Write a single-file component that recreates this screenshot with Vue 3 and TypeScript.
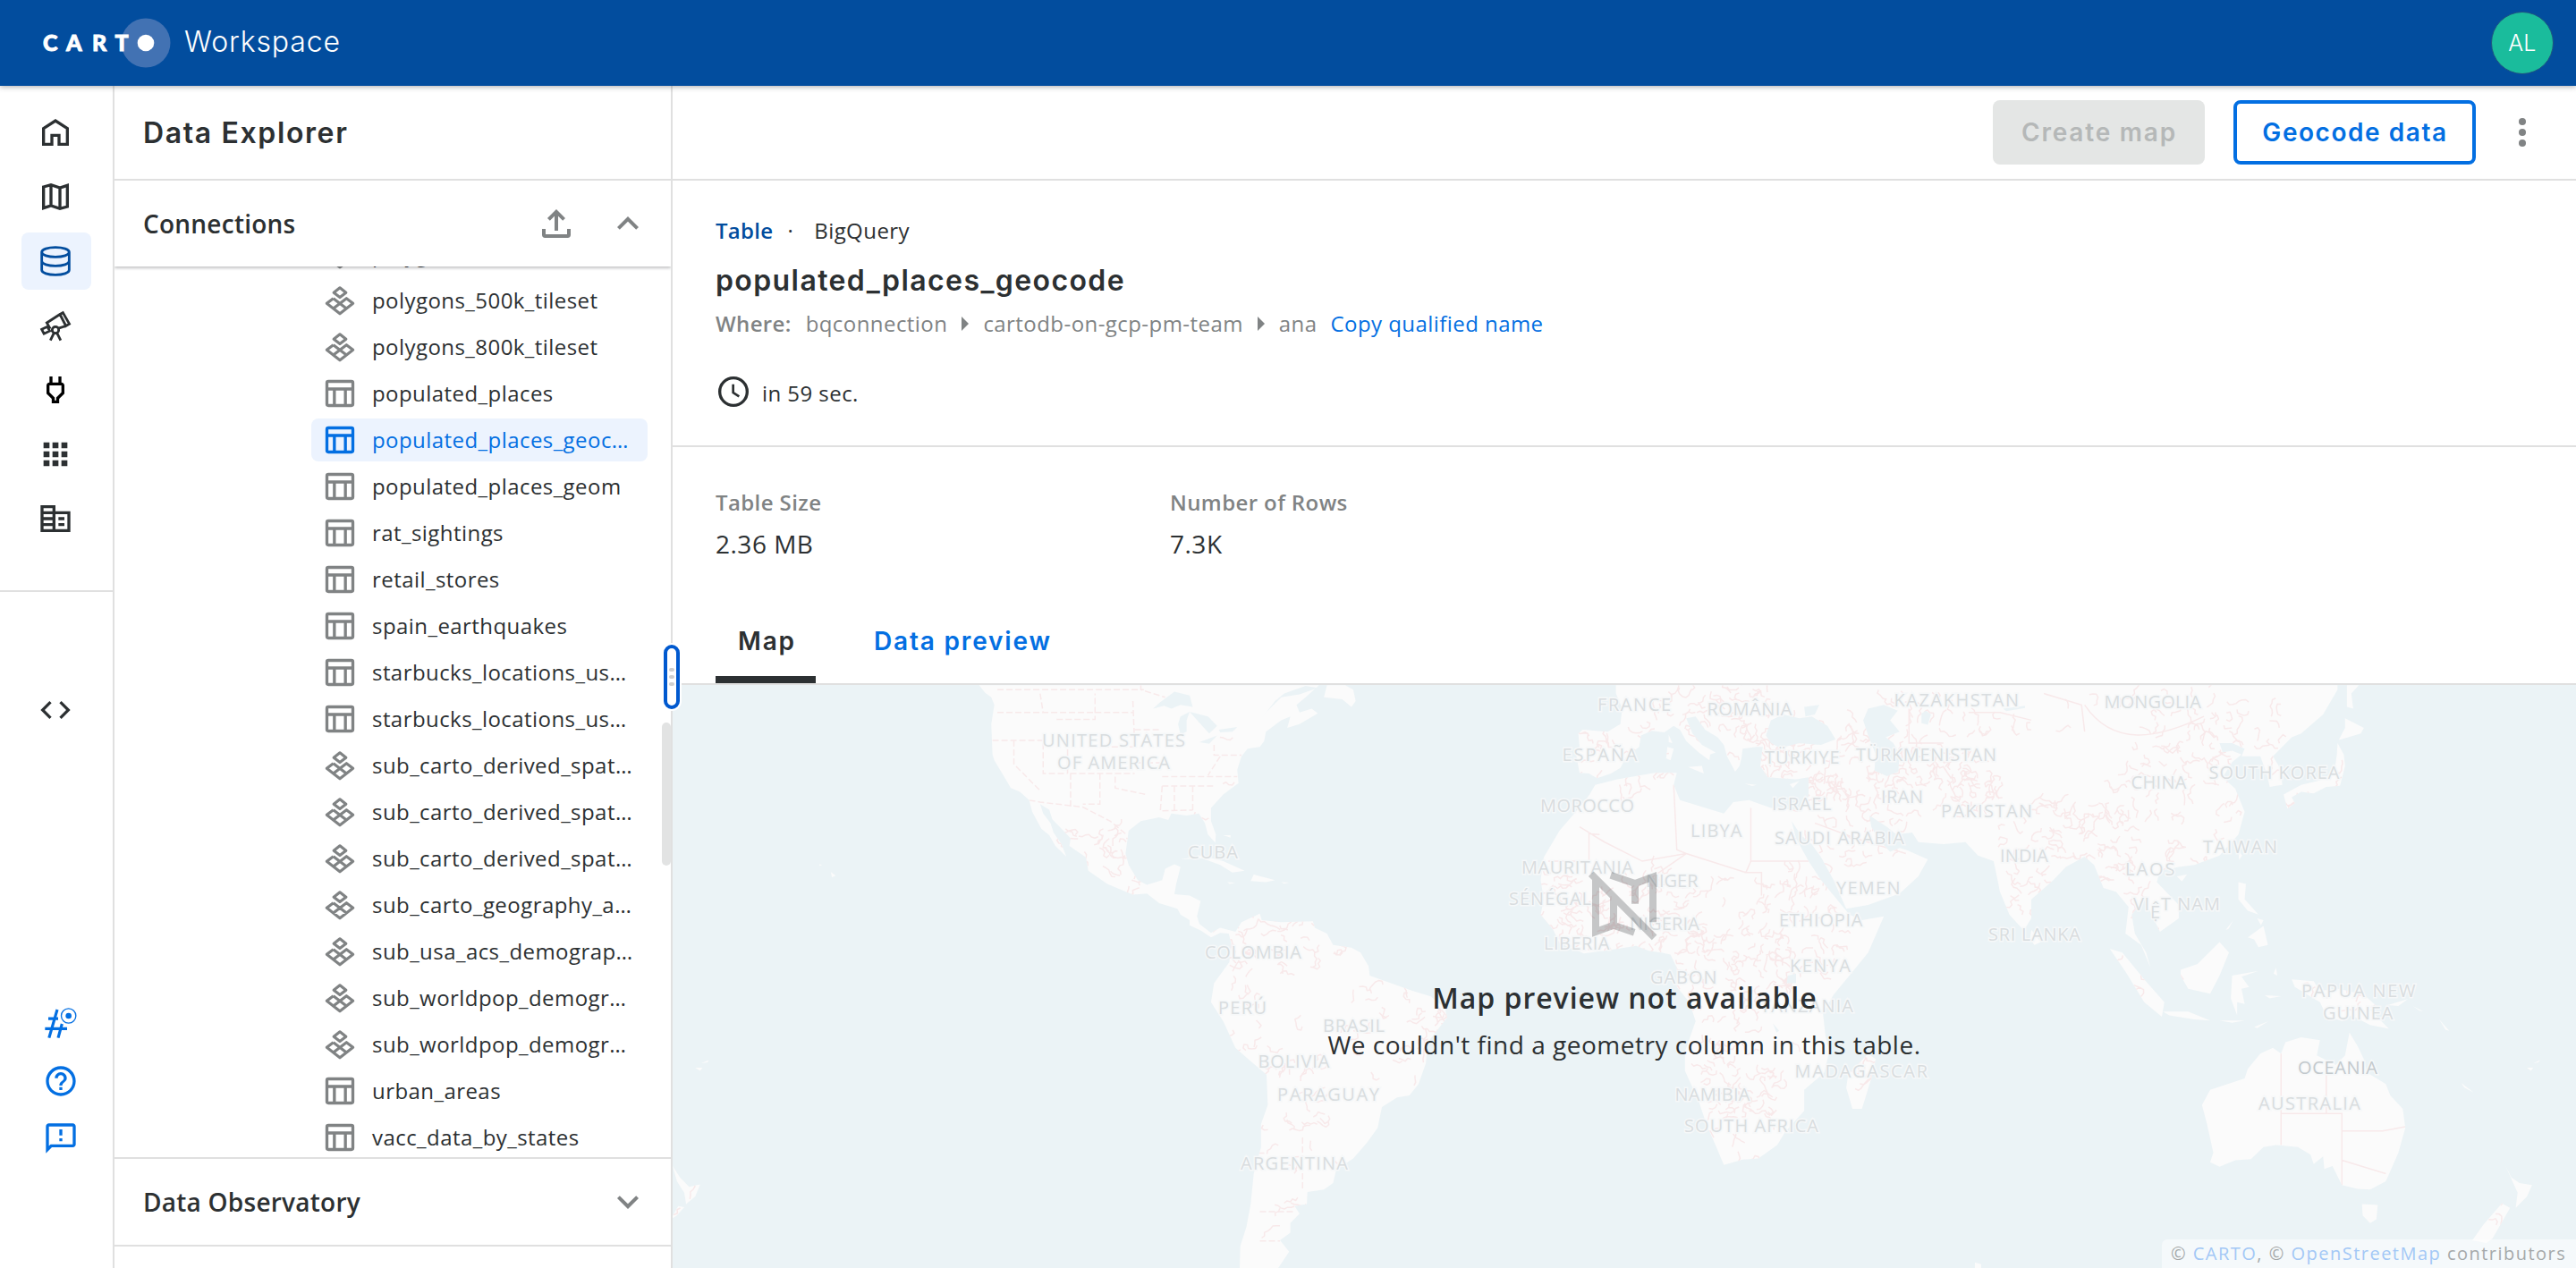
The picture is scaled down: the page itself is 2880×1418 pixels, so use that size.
<script setup lang="ts">
interface NavItem { id: string; label: string; active?: boolean; black?: boolean; d?: string; stroke?: string }
interface TreeItem { name: string; kind: 'table' | 'tileset'; active?: boolean }
type Label = [text: string, x: number, width: number, y: number, strong?: boolean]

const nav: NavItem[] = [
  { id: 'home', label: 'Home', stroke: 'M4 9.4 12 4.2l8 5.2V20h-5.6v-6H9.6v6H4z' },
  { id: 'maps', label: 'Maps', stroke: 'M4 5.4 9 4l6 2 5-1.6v14.2L15 20l-6-2-5 1.6zM9 4v14M15 6v14' },
  { id: 'data', label: 'Data Explorer', active: true, stroke: 'M2.8 6c0-1.8 4.1-3.2 9.2-3.2S21.2 4.200 21.200 6 17.100 9.200 12 9.200 2.800 7.800 2.800 6zv12c0 1.800 4.100 3.200 9.200 3.200s9.200-1.400 9.200-3.200V6M2.800 12c0 1.800 4.100 3.200 9.200 3.200s9.200-1.400 9.200-3.200' },
  { id: 'observatory', label: 'Data Observatory', stroke: 'M15 4.500 17 3.400l4.300 7.500-2.300 1.400zM15 4.500 6.200 10.200 8.500 14.200M19 12.300 14 13.900M2.800 14.600l3.800-1.800 1.500 2.900-3.800 1.800zM12 12.800a2.200 2.200 0 1 1 0 4.400 2.200 2.200 0 0 1 0-4.400zM11 17l-2.400 5M13 17l2.500 5' },
  { id: 'connections', label: 'Connections', black: true, d: 'M16 9v4.660l-3.500 3.510V19h-1v-1.830L8 13.650V9h8m0-6h-2v4h-4V3H8v4h-.01C6.900 6.990 6 7.890 6 8.990v5.520L9.500 18v3h5v-3l3.500-3.510V9c0-1.100-.9-2-2-2V3z' },
  { id: 'apps', label: 'Applications', d: 'M4 8h4V4H4v4zm6 12h4v-4h-4v4zm-6 0h4v-4H4v4zm0-6h4v-4H4v4zm6 0h4v-4h-4v4zm6-10v4h4V4h-4zm-6 4h4V4h-4v4zm6 6h4v-4h-4v4zm0 6h4v-4h-4v4z' },
  { id: 'org', label: 'Organization', d: 'M12 7V3H2v18h20V7H12zM10 19H4v-2h6v2zm0-4H4v-2h6v2zm0-4H4V9h6v2zm0-4H4V5h6v2zm10 12h-8V9h8v10zm-2-8h-4v2h4v-2zm0 4h-4v2h4v-2z' },
]

const tree: TreeItem[] = [
  { name: 'polygons_1m_tileset', kind: 'tileset' },
  { name: 'polygons_500k_tileset', kind: 'tileset' },
  { name: 'polygons_800k_tileset', kind: 'tileset' },
  { name: 'populated_places', kind: 'table' },
  { name: 'populated_places_geoc…', kind: 'table', active: true },
  { name: 'populated_places_geom', kind: 'table' },
  { name: 'rat_sightings', kind: 'table' },
  { name: 'retail_stores', kind: 'table' },
  { name: 'spain_earthquakes', kind: 'table' },
  { name: 'starbucks_locations_us…', kind: 'table' },
  { name: 'starbucks_locations_us…', kind: 'table' },
  { name: 'sub_carto_derived_spat…', kind: 'tileset' },
  { name: 'sub_carto_derived_spat…', kind: 'tileset' },
  { name: 'sub_carto_derived_spat…', kind: 'tileset' },
  { name: 'sub_carto_geography_a…', kind: 'tileset' },
  { name: 'sub_usa_acs_demograp…', kind: 'tileset' },
  { name: 'sub_worldpop_demogr…', kind: 'tileset' },
  { name: 'sub_worldpop_demogr…', kind: 'tileset' },
  { name: 'urban_areas', kind: 'table' },
  { name: 'vacc_data_by_states', kind: 'table' },
]

const labels: Label[] = [
  ['UNITED STATES', 1165, 160, 835], ['OF AMERICA', 1182, 126, 860], ['CUBA', 1328, 56, 960],
  ['COLOMBIA', 1347, 108, 1071.500], ['PERÚ', 1362, 54, 1134], ['BRASIL', 1479, 69, 1154],
  ['BOLIVIA', 1406.500, 80, 1193.500], ['PARAGUAY', 1428, 114, 1231], ['ARGENTINA', 1387, 120, 1308],
  ['LIBERIA', 1726, 73.500, 1061.500], ['MAURITANIA', 1701, 125, 976.500], ['SÉNÉGAL', 1687, 92, 1011.500],
  ['FRANCE', 1786, 82, 794.500], ['ROMÂNIA', 1908.500, 95, 799.500], ['KAZAKHSTAN', 2117.500, 139.500, 789.500],
  ['MONGOLIA', 2352.500, 108.500, 792], ['ESPAÑA', 1746.500, 84, 851], ['TÜRKIYE', 1973, 83.500, 854],
  ['TÜRKMENISTAN', 2075, 157, 850.500], ['SOUTH KOREA', 2469.500, 146, 870.500], ['CHINA', 2382.500, 62, 881.500],
  ['IRAN', 2103, 47, 898], ['ISRAEL', 1981, 66.500, 905.500], ['PAKISTAN', 2170, 102, 913.500],
  ['MOROCCO', 1722, 105, 908], ['LIBYA', 1890, 57.500, 936], ['SAUDI ARABIA', 1984, 145, 943.500],
  ['INDIA', 2236, 54, 964], ['TAIWAN', 2463, 83, 954], ['LAOS', 2376, 55.500, 978.500],
  ['VI', 2385, 18, 1018], ['Ệ', 2404, 11, 1027], ['T NAM', 2416, 66, 1018],
  ['NIGER', 1840, 58.500, 991.500], ['NIGERIA', 1822, 78, 1040], ['YEMEN', 2053, 71.500, 1000],
  ['ETHIOPIA', 1989, 93.500, 1036], ['SRI LANKA', 2223, 103, 1051.500], ['KENYA', 2001, 68, 1086.500],
  ['GABON', 1845, 74.500, 1100], ['TANZANIA', 1968, 104, 1132], ['MADAGASCAR', 2006.500, 148.500, 1204.500],
  ['NAMIBIA', 1872.500, 84, 1230.500], ['SOUTH AFRICA', 1883, 150, 1266], ['PAPUA NEW', 2573, 127.500, 1114.500],
  ['GUINEA', 2597, 78.500, 1139.500], ['OCEANIA', 2569, 89, 1201, true], ['AUSTRALIA', 2525, 114, 1240.500],
]

/* Each hemisphere is digitised in its own sheet units and placed by a transform. */
const west = 'matrix(.6824 0 0 .4261 750 750)'
const east = 'matrix(.7015 0 0 .4261 1780 750)'

const americas = [
  'M505 38 515 58 525 70 530 90 525 140 527 220 530 235 545 275 557 308 572 318 587 340 592 370 607 415 620 432 630 460 648 488 640 455 627 425 622 400 610 375 605 350 620 365 625 390 640 415 655 440 653 460 680 490 684 525 715 560 757 588 780 585 800 610 830 625 835 640 850 655 850 668 868 682 885 700 900 688 914 690 918 715 915 765 890 820 885 870 905 920 925 990 950 1025 976 1060 978 1140 967 1190 967 1250 955 1320 950 1400 943 1460 933 1510 932 1568 995 1568 1013 1525 998 1495 1015 1475 1015 1450 1030 1425 1022 1405 1042 1400 1043 1368 1070 1362 1085 1345 1090 1310 1118 1280 1140 1240 1158 1200 1165 1145 1190 1120 1210 1115 1225 1085 1237 1030 1240 975 1255 945 1272 910 1268 885 1245 855 1215 840 1180 820 1145 800 1143 775 1130 740 1115 727 1085 720 1075 690 1055 675 1052 658 1000 660 968 655 965 638 935 660 925 685 900 675 885 688 866 665 862 645 868 605 850 590 825 587 828 560 835 515 825 508 810 520 805 550 780 562 765 550 750 510 745 480 750 420 770 395 800 385 815 392 820 375 845 380 865 375 875 400 880 430 892 452 893 430 885 395 885 360 905 325 930 295 928 260 935 225 945 205 965 200 972 185 975 160 1000 130 1015 120 1010 150 1030 140 1060 112 1050 100 1030 110 1025 90 1040 70 1062 38z',
  'M1075 38 1070 70 1100 75 1115 95 1122 80 1118 50 1105 38z',
  'M835 495 870 485 905 500 940 525 920 530 900 510 870 492zM955 535 990 550 975 555 950 552zM912 555 925 557 915 560zM1000 555 1013 556 1005 559zM905 432 917 432 917 438z',
  'M3 1300 15 1330 30 1355 48 1348 40 1380 25 1400 22 1370 10 1340zM0 1440 12 1405 22 1408 10 1430zM40 1042 52 1042 48 1050zM50 1030 62 1022 60 1028zM262 528 270 538 264 542zM243 508 248 510 244 512z',
].join('')
const lakes = 'M790 100 800 85 825 55 850 65 855 95 835 90 820 100 808 92zM835 120 850 108 845 130 845 160 835 168 831 140zM850 108 880 120 895 145 882 165 868 140zM866 188 895 170 882 192zM898 155 928 148 920 160 900 162zM1000 70 1030 62 1060 45 1040 40 1005 60 990 80 965 130 975 110z'

const eurasia = [
  'M38 38V60L48 100 45 140 25 160-15 155-22 165-20 200-25 225-20 268-5 270 8 282 30 270 45 255 55 225 75 200 78 170 95 158 115 162 130 145 140 155 150 185 170 215 187 235 188 220 197 215 175 195 160 165 150 125 165 120 180 155 200 175 210 195 215 225 228 265 235 250 238 230 240 205 262 200 272 200 268 250 280 280 325 285 345 280 345 330 335 362 325 365 285 360 250 340 225 345 210 375 190 365 140 340 130 300 135 268 100 268 40 285 5 300-4 325-18 355-52 420-77 490-82 550-77 600-82 640-62 680-52 715-13 742 30 733 70 722 90 735 110 740 125 745 135 780 135 830 155 870 165 920 148 1000 148 1050 170 1130 182 1190 198 1250 210 1297 240 1283 265 1280 295 1245 308 1210 338 1155 338 1100 370 1055 378 1000 372 960 368 900 385 850 410 800 440 740 465 645 430 655 410 640 395 610 365 550 345 500 325 440 318 395 332 430 342 445 350 455 365 490 385 550 405 625 440 615 490 585 520 540 535 495 500 470 490 465 475 475 460 450 445 410 442 380 470 410 485 430 510 425 520 450 560 455 595 450 615 485 640 500 650 580 665 640 688 682 700 650 700 600 735 550 755 515 785 488 800 510 815 570 835 580 855 620 850 690 875 720 890 780 883 740 865 690 860 640 880 600 905 685 935 650 935 615 900 555 905 525 935 515 960 510 1000 485 1030 430 1040 370 1025 310 1005 280 1020 240 1035 220 1020 210 1005 215 1000 190 1020 190 1040 205 1035 225 1065 225 1075 270 1080 305 1100 300 1098 260 1085 225 1115 175 1130 165 1165 115 1188 50V38z',
  'M153 253 175 250 178 270zM120 200 130 205 125 235 118 230zM122 168 128 190 122 188zM243 296 262 300 255 303zM315 298 330 290 320 308z',
  'M405 1095 408 1060 440 1005 452 1020 445 1070 430 1150 415 1150zM700 680 715 712 705 720 698 705z',
  'M825 730 845 740 880 810 912 870 908 908 880 870 850 790zM910 895 950 895 985 918 960 915 920 905zM938 785 965 770 1000 712 1015 740 1000 800 985 848 950 835 938 800zM1020 800 1062 788 1035 803 1047 830 1035 835 1040 875 1028 870 1028 905 1018 860zM1090 780 1092 800 1086 795zM1000 918 1040 918 1020 924zM1055 935 1078 920 1060 938zM1072 852 1098 854 1080 860z',
  'M1030 555 1042 560 1040 600 1062 640 1045 630 1030 600zM1045 700 1070 670 1077 720 1062 726 1055 705zM1010 680 1022 655 1014 678zM1060 650 1070 655 1066 668zM1030 470 1036 485 1031 497zM932 540 948 535 940 553z',
  'M1115 810 1150 815 1160 840 1190 835 1230 850 1250 880 1240 890 1270 940 1240 930 1210 905 1195 920 1170 905 1160 870 1120 830zM1268 878 1300 862 1285 880zM1308 880 1325 895 1318 892zM1350 915 1366 945 1360 942z',
  'M1203 38H1222L1210 60 1213 100 1203 95zM1200 125 1230 150 1225 165 1205 175 1190 182 1200 150zM1188 190 1198 220 1200 250 1192 302 1170 305 1150 322 1130 318 1115 332 1120 348 1108 362 1102 325 1130 300 1160 288 1183 265 1187 220z',
  'M972 1140 985 1100 1040 1070 1045 1045 1065 1005 1085 990 1098 1005 1105 975 1130 962 1160 970 1155 1010 1185 1035 1200 1010 1207 950 1220 985 1230 1020 1235 1055 1265 1085 1272 1115 1292 1150 1296 1200 1285 1265 1265 1340 1240 1362 1220 1360 1195 1350 1180 1300 1167 1308 1165 1275 1150 1295 1145 1270 1125 1250 1090 1245 1070 1250 1050 1282 1025 1285 1000 1302 985 1290 990 1265 980 1190zM1227 1400 1252 1402 1250 1440 1240 1450 1228 1430z',
  'M1455 1297 1465 1330 1478 1345 1498 1350 1490 1380 1472 1410 1475 1370zM1450 1398 1463 1410 1435 1490 1425 1502 1403 1495 1420 1455zM1385 1082 1405 1107 1390 1094zM1490 1042 1500 1042 1496 1050zM1500 1030 1511 1022 1508 1028zM610 1553 620 1558 620 1568 610 1568z',
].join('')
const seas = 'M285 190 277 170 285 130 305 115 330 125 350 120 375 145 388 180 365 195 330 190 300 203zM338 95 362 90 355 115 340 120zM440 100 465 90 487 105 475 130 490 160 468 175 480 190 490 220 488 265 470 277 450 262 452 220 440 170 432 130zM525 112 532 105 540 115 535 142 525 138zM312 800 325 795 325 820 310 820zM655 100 690 92 690 98 660 106zM288 925 298 945 294 950z'

const stateLines = 'M535 110H695M605 60 610 110M632 128H695V60M695 110H757M757 80 760 200H712M527 183H610V270H650M562 183V245L607 318M650 183V270H760M655 270V358M703 270V350H675M728 278V308L778 325M760 155H800M765 242H805M805 303 890 303M805 278H928M825 303V370M855 303V370M805 303 802 368 855 366M890 195V222H935M900 225 880 275M587 340 605 345 675 358 720 395 748 432M535 50H775M965 1420H1022M965 1497H998M1035 1225V1360M770 38V50L810 70'
const eastLines = 'M1098 1005V1245M1098 1162H1195V1350M1170 1060V1162M1195 1208H1260L1296 1197M1195 1285 1265 1320M253 360V500H345M253 500 245 530 270 530V590M130 300 135 470 150 480 245 530M150 480 80 560M-20 410 20 450 80 500 150 480M12 430-5 428V500H-70M355 400 420 440 500 480M505 100V190H560M600 110H650L700 130M720 60 780 90 785 160M785 90C830 200 900 180 975 120'

/* Repeatable pseudo-random walk used for the minor administrative borders. */
let seed = 20230
const rand = () => {
  seed = (seed * 16807) % 2147483647
  return seed / 2147483647
}
const zones: number[][] = [
  [1230, 965, 55, 45, 45], [1400, 880, 60, 60, 14], [1420, 1050, 80, 40, 44], [1385, 1130, 30, 70, 16], [1560, 1150, 60, 70, 36],
  [1440, 1260, 50, 130, 46], [1810, 850, 60, 40, 34], [1900, 790, 90, 30, 46], [2000, 850, 60, 40, 60], [2090, 880, 60, 70, 56],
  [2150, 830, 90, 60, 60], [2210, 880, 30, 30, 26], [2290, 960, 60, 70, 60], [2420, 900, 90, 90, 66], [2490, 810, 90, 45, 36],
  [2350, 960, 40, 70, 34], [1745, 1030, 40, 60, 50], [1850, 1040, 70, 70, 90], [1930, 1130, 80, 150, 120], [2010, 1030, 60, 70, 50],
  [1930, 1240, 60, 70, 40], [2085, 1200, 20, 50, 14], [2575, 880, 50, 40, 26], [2620, 1120, 60, 30, 14], [2395, 1080, 40, 60, 18],
  [770, 1325, 20, 30, 6], [2790, 1350, 30, 40, 10], [2040, 950, 60, 50, 16], [2340, 800, 120, 30, 16],
]
const roads = zones.map(([cx, cy, rx, ry, n]) => {
  let d = ''
  for (let i = 0; i < n; i++) {
    const a = rand() * 6.283
    const r = Math.sqrt(rand())
    let x = cx + Math.cos(a) * rx * r
    let y = cy + Math.sin(a) * ry * r
    let dir = rand() * 6.283
    d += `M${x.toFixed(1)} ${y.toFixed(1)}`
    const steps = 3 + Math.floor(rand() * 5)
    for (let s = 0; s < steps; s++) {
      dir += (rand() - 0.5) * 3
      x += Math.cos(dir) * 4
      y += Math.sin(dir) * 4
      d += `L${x.toFixed(1)} ${y.toFixed(1)}`
    }
  }
  return d
}).join('')
</script>

<template>
  <div class="app">
    <header class="topbar">
      <svg class="logo" width="170" height="96" viewBox="0 0 170 96" aria-label="CARTO">
        <circle cx="123" cy="48" r="27.500" fill="#4272b3" />
        <text x="8 34 63 88.500" y="56.800">CART</text>
        <circle cx="123" cy="48" r="9.300" fill="#fff" />
      </svg>
      <span class="product">Workspace</span>
      <span class="avatar">AL</span>
    </header>

    <div class="body">
      <nav class="rail">
        <ul class="rail-main">
          <li v-for="n in nav" :key="n.id" :class="{ active: n.active, black: n.black }" :title="n.label">
            <svg class="ic" viewBox="0 0 24 24">
              <path v-if="n.d" :d="n.d" fill="currentColor" />
              <path v-else :d="n.stroke" fill="none" stroke="currentColor" :stroke-width="n.id === 'home' || n.id === 'maps' ? 2 : 1.7" />
            </svg>
          </li>
        </ul>
        <div class="rail-dev">
          <svg class="ic" viewBox="0 0 24 24"><path fill="currentColor" d="M9.400 16.600 4.800 12l4.600-4.600L8 6l-6 6 6 6 1.400-1.400zm5.200 0 4.600-4.600-4.600-4.600L16 6l6 6-6 6-1.400-1.400z" /></svg>
        </div>
        <div class="rail-help">
          <svg class="ic" viewBox="0 0 24 24" fill="none" stroke="currentColor" stroke-width="1.900">
            <path d="M9.600 2.400 4.100 21.400M12.800 12l-2.600 9.400M3.600 8.500h6.600M1.400 15.200h14.800" />
            <circle cx="17.200" cy="6.600" r="4.900" stroke-width=".8" />
            <circle cx="17.200" cy="6.600" r="2" fill="currentColor" stroke="none" />
          </svg>
          <svg class="ic" viewBox="0 0 24 24"><path fill="currentColor" d="M11 18h2v-2h-2v2zm1-16C6.480 2 2 6.480 2 12s4.480 10 10 10 10-4.480 10-10S17.520 2 12 2zm0 18c-4.410 0-8-3.590-8-8s3.590-8 8-8 8 3.590 8 8-3.590 8-8 8zm0-14c-2.210 0-4 1.790-4 4h2c0-1.100.9-2 2-2s2 .9 2 2c0 2-3 1.750-3 5h2c0-2.250 3-2.500 3-5 0-2.210-1.790-4-4-4z" /></svg>
          <svg class="ic" viewBox="0 0 24 24"><path fill="currentColor" d="M20 2H4c-1.100 0-1.990.9-1.990 2L2 22l4-4h14c1.100 0 2-.9 2-2V4c0-1.100-.9-2-2-2zm0 14H5.170L4 17.170V4h16v12zM11 12h2v2h-2zM11 6h2v4h-2z" /></svg>
        </div>
      </nav>

      <aside class="panel">
        <h1 class="panel-title">Data Explorer</h1>
        <div class="section-head raised">
          <span>Connections</span>
          <svg class="big upload" viewBox="0 0 24 24" fill="none" stroke="currentColor" stroke-width="2"><path d="M5 15v3.300q0 .7.7.7h12.600q.7 0 .7-.7V15M12 16V5.500M7.700 9.700 12 5.400l4.300 4.300" /></svg>
          <svg class="big" viewBox="0 0 24 24"><path fill="currentColor" d="m12 8-6 6 1.410 1.410L12 10.830l4.590 4.580L18 14z" /></svg>
        </div>
        <div class="tree-wrap">
          <ul class="tree">
            <li v-for="(t, i) in tree" :key="i" :class="{ active: t.active }">
              <svg class="ic" viewBox="0 0 24 24" fill="none" stroke="currentColor">
                <template v-if="t.kind === 'table'">
                  <rect x="3.300" y="3.900" width="17.400" height="16.200" rx="1" stroke-width="2" />
                  <path d="M3 9h18M8.300 9v11M15.700 9v11" stroke-width="2" />
                </template>
                <path v-else stroke-width="1.900" stroke-linejoin="round" d="M12 3.500l4.100 3.200L12 9.900 7.900 6.700zM7.600 10.600 3.200 14l8.800 6.900 8.800-6.900-4.400-3.400-8.800 6.800M7.600 10.600l8.800 6.800" />
              </svg>
              <span>{{ t.name }}</span>
            </li>
          </ul>
          <i class="thumb"></i>
        </div>
        <div class="section-head foot">
          <span>Data Observatory</span>
          <svg class="big" viewBox="0 0 24 24"><path fill="currentColor" d="M7.410 8.590 12 13.170l4.590-4.580L18 10l-6 6-6-6z" /></svg>
        </div>
        <div class="resizer"><i></i><i></i><i></i></div>
      </aside>

      <main class="main">
        <div class="toolbar">
          <button class="btn disabled" disabled>Create map</button>
          <button class="btn outline">Geocode data</button>
          <svg class="big" viewBox="0 0 24 24" fill="currentColor"><circle cx="12" cy="6" r="2" /><circle cx="12" cy="12" r="2" /><circle cx="12" cy="18" r="2" /></svg>
        </div>

        <section class="detail">
          <div class="kind"><b>Table</b><span class="dot">·</span><span class="source">BigQuery</span></div>
          <h2>populated_places_geocode</h2>
          <div class="where">
            <b>Where:</b>
            <span>bqconnection</span><svg width="8" height="16" viewBox="0 0 8 16"><path d="M0 0 8 8 0 16z" fill="currentColor" /></svg>
            <span>cartodb-on-gcp-pm-team</span><svg width="8" height="16" viewBox="0 0 8 16"><path d="M0 0 8 8 0 16z" fill="currentColor" /></svg>
            <span>ana</span>
            <a>Copy qualified name</a>
          </div>
          <div class="updated">
            <svg class="ic" viewBox="0 0 24 24" fill="none" stroke="currentColor" stroke-width="2"><circle cx="12" cy="12" r="9.200" /><path d="M11.800 7v5.600l4 2.600" stroke-width="1.600" /></svg>
            <span>in 59 sec.</span>
          </div>
        </section>

        <section class="stats">
          <div class="stat"><label>Table Size</label><p>2.36 MB</p></div>
          <div class="stat"><label>Number of Rows</label><p>7.3K</p></div>
        </section>

        <div class="tabs">
          <button class="tab on">Map</button>
          <button class="tab">Data preview</button>
        </div>

        <section class="map">
          <svg class="canvas" viewBox="752 766 2128 652" width="2128" height="652">
            <defs>
              <clipPath id="land">
                <path :d="americas" :transform="west" />
                <path :d="eurasia" :transform="east" />
              </clipPath>
            </defs>
            <g fill="#fbfbfb">
              <path :d="americas" :transform="west" />
              <path :d="eurasia" :transform="east" />
            </g>
            <g clip-path="url(#land)" fill="none" stroke="#f8e9ea" stroke-width="1.500">
              <path :d="roads" stroke-linejoin="round" />
              <path :d="stateLines" :transform="west" class="border" stroke-dasharray="7 3" />
              <path :d="eastLines" :transform="east" class="border" />
            </g>
            <g fill="#ebf3f6">
              <path :d="lakes" :transform="west" />
              <path :d="seas" :transform="east" />
            </g>
            <g class="labels">
              <text v-for="l in labels" :key="l[0]" :x="l[1]" :y="l[3]" :textLength="l[2]" :class="{ strong: l[4] }">{{ l[0] }}</text>
            </g>
          </svg>
          <div class="empty">
            <svg width="96" height="96" viewBox="0 0 24 24" fill="none" stroke="#2c3032" stroke-width="2">
              <g opacity=".26">
                <path d="M2.700 3.300 20.400 21.100M4 5v14.500l5-1.800 5.800 2M9 10v7.700M8.200 3.700 15 6l5-1.800v12.600M15 6v5.700" />
              </g>
            </svg>
            <h3>Map preview not available</h3>
            <p>We couldn't find a geometry column in this table.</p>
          </div>
          <div class="credit">© <a>CARTO</a>, © <a>OpenStreetMap</a> contributors</div>
        </section>
      </main>
    </div>
  </div>
</template>

<style>
body { margin: 0; background: #fff; }
</style>

<style scoped>
.app { width: 2880px; height: 1418px; overflow: hidden; display: flex; flex-direction: column; background: #fff; color: #2c3032; font-family: "Open Sans", sans-serif; font-size: 24px; letter-spacing: .44px; }
ul { list-style: none; margin: 0; padding: 0; }
h1, h2, h3, p { margin: 0; }
button { font: inherit; color: inherit; background: none; border: 0; padding: 0; margin: 0; }
svg { display: block; flex: none; }
.ic { width: 40px; height: 40px; }
.big { width: 48px; height: 48px; color: #808384; }

.topbar { height: 96px; flex: none; position: relative; z-index: 5; display: flex; align-items: center; background: #024d9e; color: #fff; box-shadow: 0 1px 6px rgba(44, 48, 50, .4); box-sizing: border-box; padding: 0 25px 0 40px; }
.logo text { font: 900 25px Lato, sans-serif; letter-spacing: 0; fill: #fff; stroke: #fff; stroke-width: .9px; }
.product { font: 300 32px/40px Inter, sans-serif; letter-spacing: .87px; margin-left: -4px; padding-bottom: 2px; }
.avatar { margin-left: auto; width: 68px; height: 68px; border: 1px solid #1f5480; border-radius: 50%; background: #1abc9c; display: flex; align-items: center; justify-content: center; font: 300 25px Inter, sans-serif; letter-spacing: .2px; }

.body { flex: 1; min-height: 0; display: flex; }
.rail { width: 126px; flex: none; border-right: 2px solid #e0e0e0; display: flex; flex-direction: column; }
.rail-main { padding-top: 16px; height: 548px; border-bottom: 2px solid #e0e0e0; }
.rail-main li { width: 78px; height: 64px; margin: 4px 0 8px 24px; border-radius: 8px; display: flex; align-items: center; box-sizing: border-box; padding-left: 18px; }
.rail-main li.active { background: #ecf3fe; color: #024d9e; }
.rail-main li.black { color: #000; }
.rail-dev { padding: 112px 0 0 42px; }
.rail-help { margin-top: auto; margin-bottom: 125px; padding-left: 48px; display: flex; flex-direction: column; gap: 24px; color: #036fe2; }

.panel { width: 622px; flex: none; border-right: 2px solid #e0e0e0; display: flex; flex-direction: column; position: relative; }
.panel-title { height: 104px; flex: none; border-bottom: 2px solid #e0e0e0; padding-left: 32px; font: 600 32px/105px Inter, sans-serif; letter-spacing: 1.620px; }
.section-head { height: 96px; flex: none; display: flex; align-items: center; padding: 0 24px 0 32px; font-size: 28px; font-weight: 600; letter-spacing: .24px; background: #fff; }
.section-head span { margin-right: auto; }
.section-head .upload { margin-right: 32px; }
.raised { position: relative; z-index: 2; box-shadow: 0 2px 3px rgba(44, 48, 50, .28); clip-path: inset(0 0 -8px 0); }
.foot { border-top: 2px solid #e0e0e0; border-bottom: 2px solid #e0e0e0; }
.tree-wrap { height: 996px; flex: none; overflow: hidden; position: relative; }
.tree { margin-top: -40px; }
.tree li { height: 48px; margin: 0 26px 4px 220px; padding-left: 12px; border-radius: 8px; display: flex; align-items: center; gap: 16px; white-space: nowrap; }
.tree li:first-child { margin-top: 2px; }
.tree li span { padding-bottom: 2px; }
.tree .ic { color: #808384; }
.tree li.active { background: #ecf3fe; color: #036fe2; }
.tree li.active .ic { color: #036fe2; }
.thumb { position: absolute; right: 0; top: 510px; width: 10px; height: 160px; border-radius: 6px; background: #e2e3e3; }
.resizer { position: absolute; z-index: 3; left: 614px; top: 625px; width: 10px; height: 64px; border: 4px solid #0059cf; border-radius: 9px; background: #fff; box-shadow: 0 0 0 2px #fff; display: flex; flex-direction: column; align-items: center; justify-content: center; gap: 4px; }
.resizer i { width: 6px; height: 4px; border-radius: 2px; background: #cfcfcf; }

.main { flex: 1; min-width: 0; display: flex; flex-direction: column; }
.toolbar { height: 104px; flex: none; border-bottom: 2px solid #e0e0e0; display: flex; align-items: center; justify-content: flex-end; padding-right: 36px; }
.btn { height: 72px; border-radius: 8px; box-sizing: border-box; font: 600 28px Inter, sans-serif; padding-left: 1px; }
.btn.disabled { width: 237px; background: #e4e6e5; color: #b5b8b8; letter-spacing: 1.800px; margin-right: 32px; }
.btn.outline { width: 271px; border: 4px solid #036fe2; color: #036fe2; letter-spacing: 1.550px; margin-right: 28px; }

.detail { flex: none; box-sizing: border-box; padding: 38px 48px 0; border-bottom: 2px solid #e0e0e0; height: 298px; }
.kind { height: 36px; line-height: 36px; display: flex; }
.kind b { color: #024d9e; font-weight: 600; letter-spacing: .3px; }
.dot { margin: 0 23px 0 16px; }
h2 { margin-top: 8px; font: 600 32px/60px Inter, sans-serif; letter-spacing: 1.400px; }
.where { height: 36px; line-height: 36px; display: flex; align-items: center; gap: 16px; color: #808384; }
.where b { font-weight: 600; letter-spacing: .35px; }
.where a { color: #036fe2; margin-left: -1px; }
.updated { margin-top: 38px; height: 40px; display: flex; align-items: center; gap: 12px; }
.updated span { line-height: 36px; padding-top: 3px; }

.stats { padding: 44px 48px 0; height: 124px; flex: none; display: flex; }
.stat { width: 508px; }
.stat label { display: block; line-height: 36px; font-weight: 600; color: #808384; letter-spacing: .4px; }
.stat p { margin-top: 4px; font-size: 28px; line-height: 48px; letter-spacing: .5px; }

.tabs { height: 96px; flex: none; border-bottom: 2px solid #e0e0e0; padding-left: 48px; display: flex; gap: 40px; }
.tab { height: 96px; padding: 2px 24px 0 25px; font: 600 28px Inter, sans-serif; letter-spacing: 1.820px; color: #036fe2; box-sizing: border-box; }
.tab.on { width: 112px; color: #2c3032; box-shadow: inset 0 -8px 0 #2c3032; }

.map { flex: 1; position: relative; background: #ebf3f6; overflow: hidden; }
.border { vector-effect: non-scaling-stroke; }
.labels text { font: 400 20px "Open Sans", sans-serif; letter-spacing: 0; fill: #d9dddf; stroke: #f6f8f9; stroke-width: 3px; paint-order: stroke; }
.labels .strong { fill: #c3c9cd; }
.empty { position: absolute; inset: 0; padding-top: 198px; display: flex; flex-direction: column; align-items: center; }
.empty h3 { margin-top: 32px; font-size: 32px; font-weight: 600; line-height: 48px; letter-spacing: .97px; padding-left: 1px; }
.empty p { margin-top: 8px; font-size: 28px; line-height: 40px; letter-spacing: .51px; }
.credit { position: absolute; right: 0; bottom: 0; height: 32px; width: 463px; padding-left: 10px; box-sizing: border-box; line-height: 31px; font-size: 20px; letter-spacing: 1.480px; white-space: nowrap; background: rgba(255, 255, 255, .5); border-top-left-radius: 6px; color: #a5a9aa; }
.credit a { color: #a3c8f6; }
</style>
